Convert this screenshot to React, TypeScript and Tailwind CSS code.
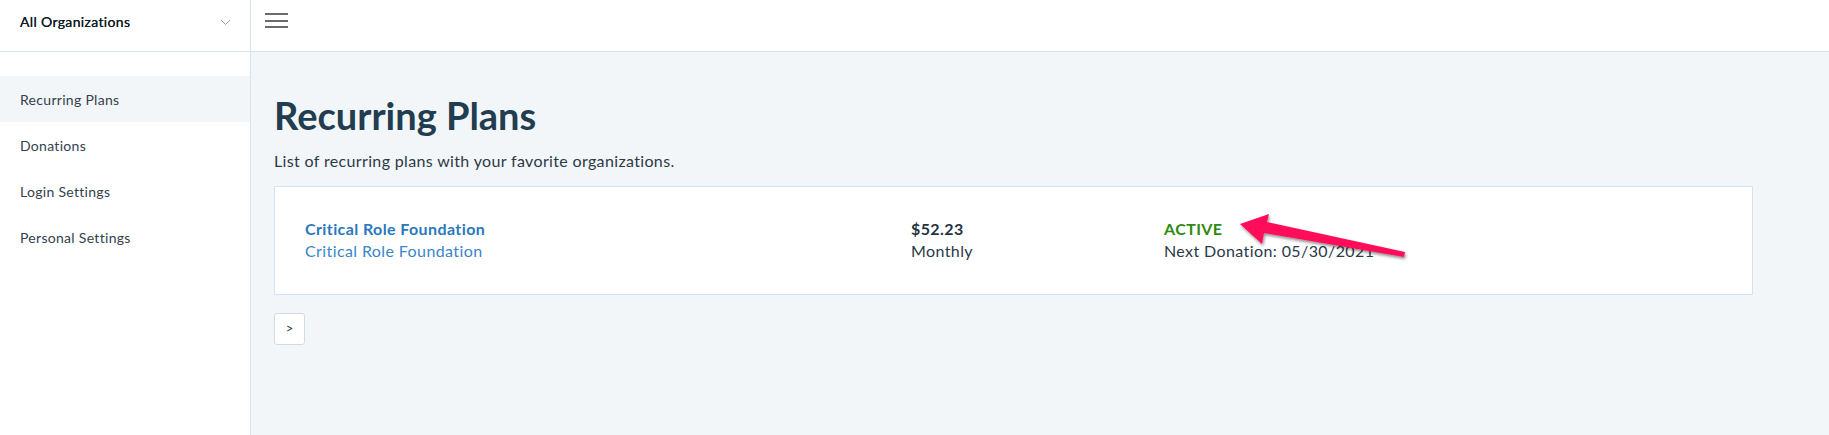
import React from "react";

const navItems = ["Recurring Plans", "Donations", "Login Settings", "Personal Settings"];

export default function App() {
  return (
    <div className="relative flex w-[1829px] h-[435px] overflow-hidden font-['Lato',sans-serif] text-[#2b3a47]">
      <aside className="w-[251px] shrink-0 flex flex-col border-r border-[#d3e4f1] bg-white">
        <div className="h-[52px] shrink-0 flex items-start justify-between pt-[12px] pl-5 pr-[19px] border-b border-[#d3e4f1]">
          <span className="text-[14px] leading-[20px] tracking-[0.35px] text-[#0f1c27] [text-shadow:0_0_0.2px_#0f1c27]">All Organizations</span>
          <svg className="mt-[7px]" width="11" height="7" viewBox="0 0 11 7" fill="none">
            <path d="M1 1l4.5 4.5L10 1" stroke="#8ea0ae" strokeWidth="1" />
          </svg>
        </div>
        <nav className="pt-6 flex flex-col">
          {navItems.map((item, i) => (
            <div
              key={item}
              className={
                i === 0
                  ? "h-[46px] flex items-center pl-5 text-[14px] tracking-[0.3px] text-[#33414d] bg-[#f3f6f9]"
                  : "h-[46px] flex items-center pl-5 text-[14px] tracking-[0.3px] text-[#33414d]"
              }
            >
              {item}
            </div>
          ))}
        </nav>
      </aside>
      <div className="flex-1 flex flex-col">
        <header className="h-[52px] shrink-0 flex items-start pt-[13px] pl-[14px] bg-white border-b border-[#d3e4f1]">
          <div className="flex flex-col gap-[4.5px] w-[23px]">
            <span className="block h-[2px] bg-[#6a6a6a]" />
            <span className="block h-[2px] bg-[#6a6a6a]" />
            <span className="block h-[2px] bg-[#6a6a6a]" />
          </div>
        </header>
        <main className="flex-1 bg-[#f3f6f9] pl-[23px] pt-[42px]">
          <h1 className="text-[38px] leading-[42px] font-bold text-[#213d4f]">Recurring Plans</h1>
          <p className="mt-[14px] text-[16px] leading-[22px] tracking-[0.35px] text-[#2b3a47]">
            List of recurring plans with your favorite organizations.
          </p>
          <div className="mt-[14px] w-[1479px] h-[109px] bg-white border border-[#d3e4f1] flex items-center pl-[30px] pb-[2px]">
            <div className="w-[606px] flex flex-col text-[16px] leading-[22px] tracking-[0.4px]">
              <span className="font-bold text-[#2a78bd]">Critical Role Foundation</span>
              <span className="text-[#3a86c8]">Critical Role Foundation</span>
            </div>
            <div className="w-[253px] flex flex-col text-[16px] leading-[22px] tracking-[0.4px]">
              <span className="font-bold text-[#1f3343]">$52.23</span>
              <span className="text-[#2b3a47]">Monthly</span>
            </div>
            <div className="flex flex-col text-[16px] leading-[22px] tracking-[0.4px]">
              <span className="font-bold text-[#2f8a10]">ACTIVE</span>
              <span className="text-[#2b3a47]">Next Donation: 05/30/2021</span>
            </div>
          </div>
          <button className="mt-[18px] w-[31px] h-[32px] bg-white border border-[#cfdbe6] rounded-[3px] flex items-center justify-center text-[13px] text-[#2b3a47]">
            &gt;
          </button>
        </main>
      </div>
      <svg className="absolute left-0 top-0 pointer-events-none" width="1829" height="435" viewBox="0 0 1829 435">
        <defs>
          <filter id="sh" x="-20%" y="-50%" width="140%" height="200%">
            <feDropShadow dx="1" dy="2" stdDeviation="1.5" floodColor="#000" floodOpacity="0.45" />
          </filter>
        </defs>
        <polygon
          points="1240,224 1269,214 1267,222 1405,252 1404,257 1264,233 1262,244"
          fill="#ff0f5a"
          filter="url(#sh)"
        />
      </svg>
    </div>
  );
}
